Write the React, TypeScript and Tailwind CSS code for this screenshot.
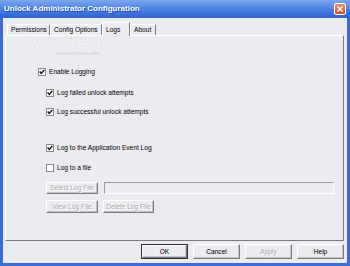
import type { ReactNode } from "react";

const face = "font-['Liberation_Sans',Arial,sans-serif]";

function Check({ checked }: { checked?: boolean }) {
  return (
    <span className="w-[8px] h-[8px] border border-[#8c8c8c] bg-white flex items-center justify-center shrink-0">
      {checked && (
        <svg width="6" height="6" viewBox="0 0 6 6">
          <path d="M0.6 2.6 L2.3 4.4 L5.4 0.9" stroke="#111" strokeWidth="1.4" fill="none" />
        </svg>
      )}
    </span>
  );
}

function Option({ checked, children, sub }: { checked?: boolean; children: ReactNode; sub?: boolean }) {
  return (
    <div className={`flex items-center gap-[3px] h-[10px] ${sub ? "pl-[40px]" : "pl-[32px]"}`}>
      <Check checked={checked} />
      <span className="text-[6.6px] leading-[10px] text-black">{children}</span>
    </div>
  );
}

function Btn({
  children,
  className,
  disabled,
  isDefault,
}: {
  children: ReactNode;
  className: string;
  disabled?: boolean;
  isDefault?: boolean;
}) {
  return (
    <div
      className={`${className} flex items-center justify-center text-[6.6px] ${
        isDefault ? "border border-[#2e2e2e]" : ""
      }`}
    >
      <div
        className={`w-full h-full flex items-center justify-center border border-t-white border-l-white border-r-[#7c7c7c] border-b-[#7c7c7c] shadow-[inset_-1px_-1px_0_#c4c3c8] ${
          disabled ? "text-[#a8a8a8] [text-shadow:1px_1px_0_#fff]" : "text-black"
        }`}
      >
        {children}
      </div>
    </div>
  );
}

export default function App() {
  const tabs = [
    { label: "Permissions", w: "w-[43px]" },
    { label: "Config Options", w: "w-[52px]" },
    { label: "Logs", w: "w-[28px]", active: true },
    { label: "About", w: "w-[26px]" },
  ];

  return (
    <div className={`${face} w-[350px] h-[266px] flex flex-col bg-[#3a6bd6] relative overflow-hidden`}>
      {/* title bar */}
      <div className="h-[18px] flex items-center justify-between bg-linear-to-b from-[#7ea6ec] via-[#4a82e4] to-[#2e61cf]">
        <span className="pl-[4px] text-[8px] font-bold text-white [text-shadow:1px_1px_0_#1d46a8]">
          Unlock Administrator Configuration
        </span>
        <div className="mr-[4px] w-[12px] h-[12px] rounded-[2px] border border-white bg-linear-to-b from-[#ec8f6c] to-[#d24f2c] flex items-center justify-center">
          <svg width="6" height="6" viewBox="0 0 6 6">
            <path d="M0.5 0.5 L5.5 5.5 M5.5 0.5 L0.5 5.5" stroke="white" strokeWidth="1.4" />
          </svg>
        </div>
      </div>

      {/* body */}
      <div className="flex-1 mx-[3px] mb-[3px] bg-[#ecebef] flex flex-col pt-[4px] pb-[4px]">
        {/* tabs */}
        <div className="h-[13px] flex items-end pl-[4px] relative z-10">
          {tabs.map((t) =>
            t.active ? (
              <div
                key={t.label}
                className={`${t.w} h-[14px] -mb-[1px] bg-[#ecebef] border-t border-l border-t-white border-l-white border-r border-r-[#7c7c7c] flex items-center pl-[3px] text-[6.6px] text-black`}
              >
                {t.label}
              </div>
            ) : (
              <div
                key={t.label}
                className={`${t.w} h-[11px] border-t border-l border-t-white border-l-white border-r border-r-[#7c7c7c] flex items-center pl-[3px] text-[6.6px] text-black`}
              >
                {t.label}
              </div>
            ),
          )}
        </div>

        {/* panel */}
        <div className="h-[206px] ml-[2px] mr-[3px] border border-t-white border-l-white border-r-[#7c7c7c] border-b-[#7c7c7c] flex flex-col">
          <div className="mt-[31px]">
            <Option checked>Enable Logging</Option>
          </div>
          <div className="mt-[11px]">
            <Option checked sub>
              Log failed unlock attempts
            </Option>
          </div>
          <div className="mt-[9px]">
            <Option checked sub>
              Log successful unlock attempts
            </Option>
          </div>
          <div className="mt-[26px]">
            <Option checked sub>
              Log to the Application Event Log
            </Option>
          </div>
          <div className="mt-[10px]">
            <Option sub>Log to a file</Option>
          </div>
          <div className="mt-[9px] pl-[40px] flex items-center gap-[6px] h-[12px]">
            <Btn className="w-[52px] h-[12px]" disabled>
              Select Log File
            </Btn>
            <div className="w-[230px] h-[12px] border border-t-[#9a9a9a] border-l-[#9a9a9a] border-r-white border-b-white" />
          </div>
          <div className="mt-[6px] pl-[40px] flex items-center gap-[5px] h-[13px]">
            <Btn className="w-[52px] h-[13px]" disabled>
              View Log File
            </Btn>
            <Btn className="w-[51px] h-[13px]" disabled>
              Delete Log File
            </Btn>
          </div>
        </div>

        {/* dialog buttons */}
        <div className="mt-[3px] h-[15px] flex justify-end gap-[5px] pr-[3px]">
          <Btn className="w-[47px] h-[15px]" isDefault>
            OK
          </Btn>
          <Btn className="w-[47px] h-[15px]">Cancel</Btn>
          <Btn className="w-[47px] h-[15px]" disabled>
            Apply
          </Btn>
          <Btn className="w-[47px] h-[15px]">Help</Btn>
        </div>
      </div>

      {/* softpedia watermark */}
      <div className="absolute left-[28px] top-[31px] pointer-events-none flex flex-col items-center">
        <span className="text-[13px] font-bold tracking-[1px] text-white/80 [text-shadow:0_0_1px_#bdbbc1]">
          SOFTPEDIA
        </span>
        <span className="text-[5px] text-[#cfcdd3] -mt-[1px] ml-[16px]">www.softpedia.com</span>
      </div>
    </div>
  );
}
